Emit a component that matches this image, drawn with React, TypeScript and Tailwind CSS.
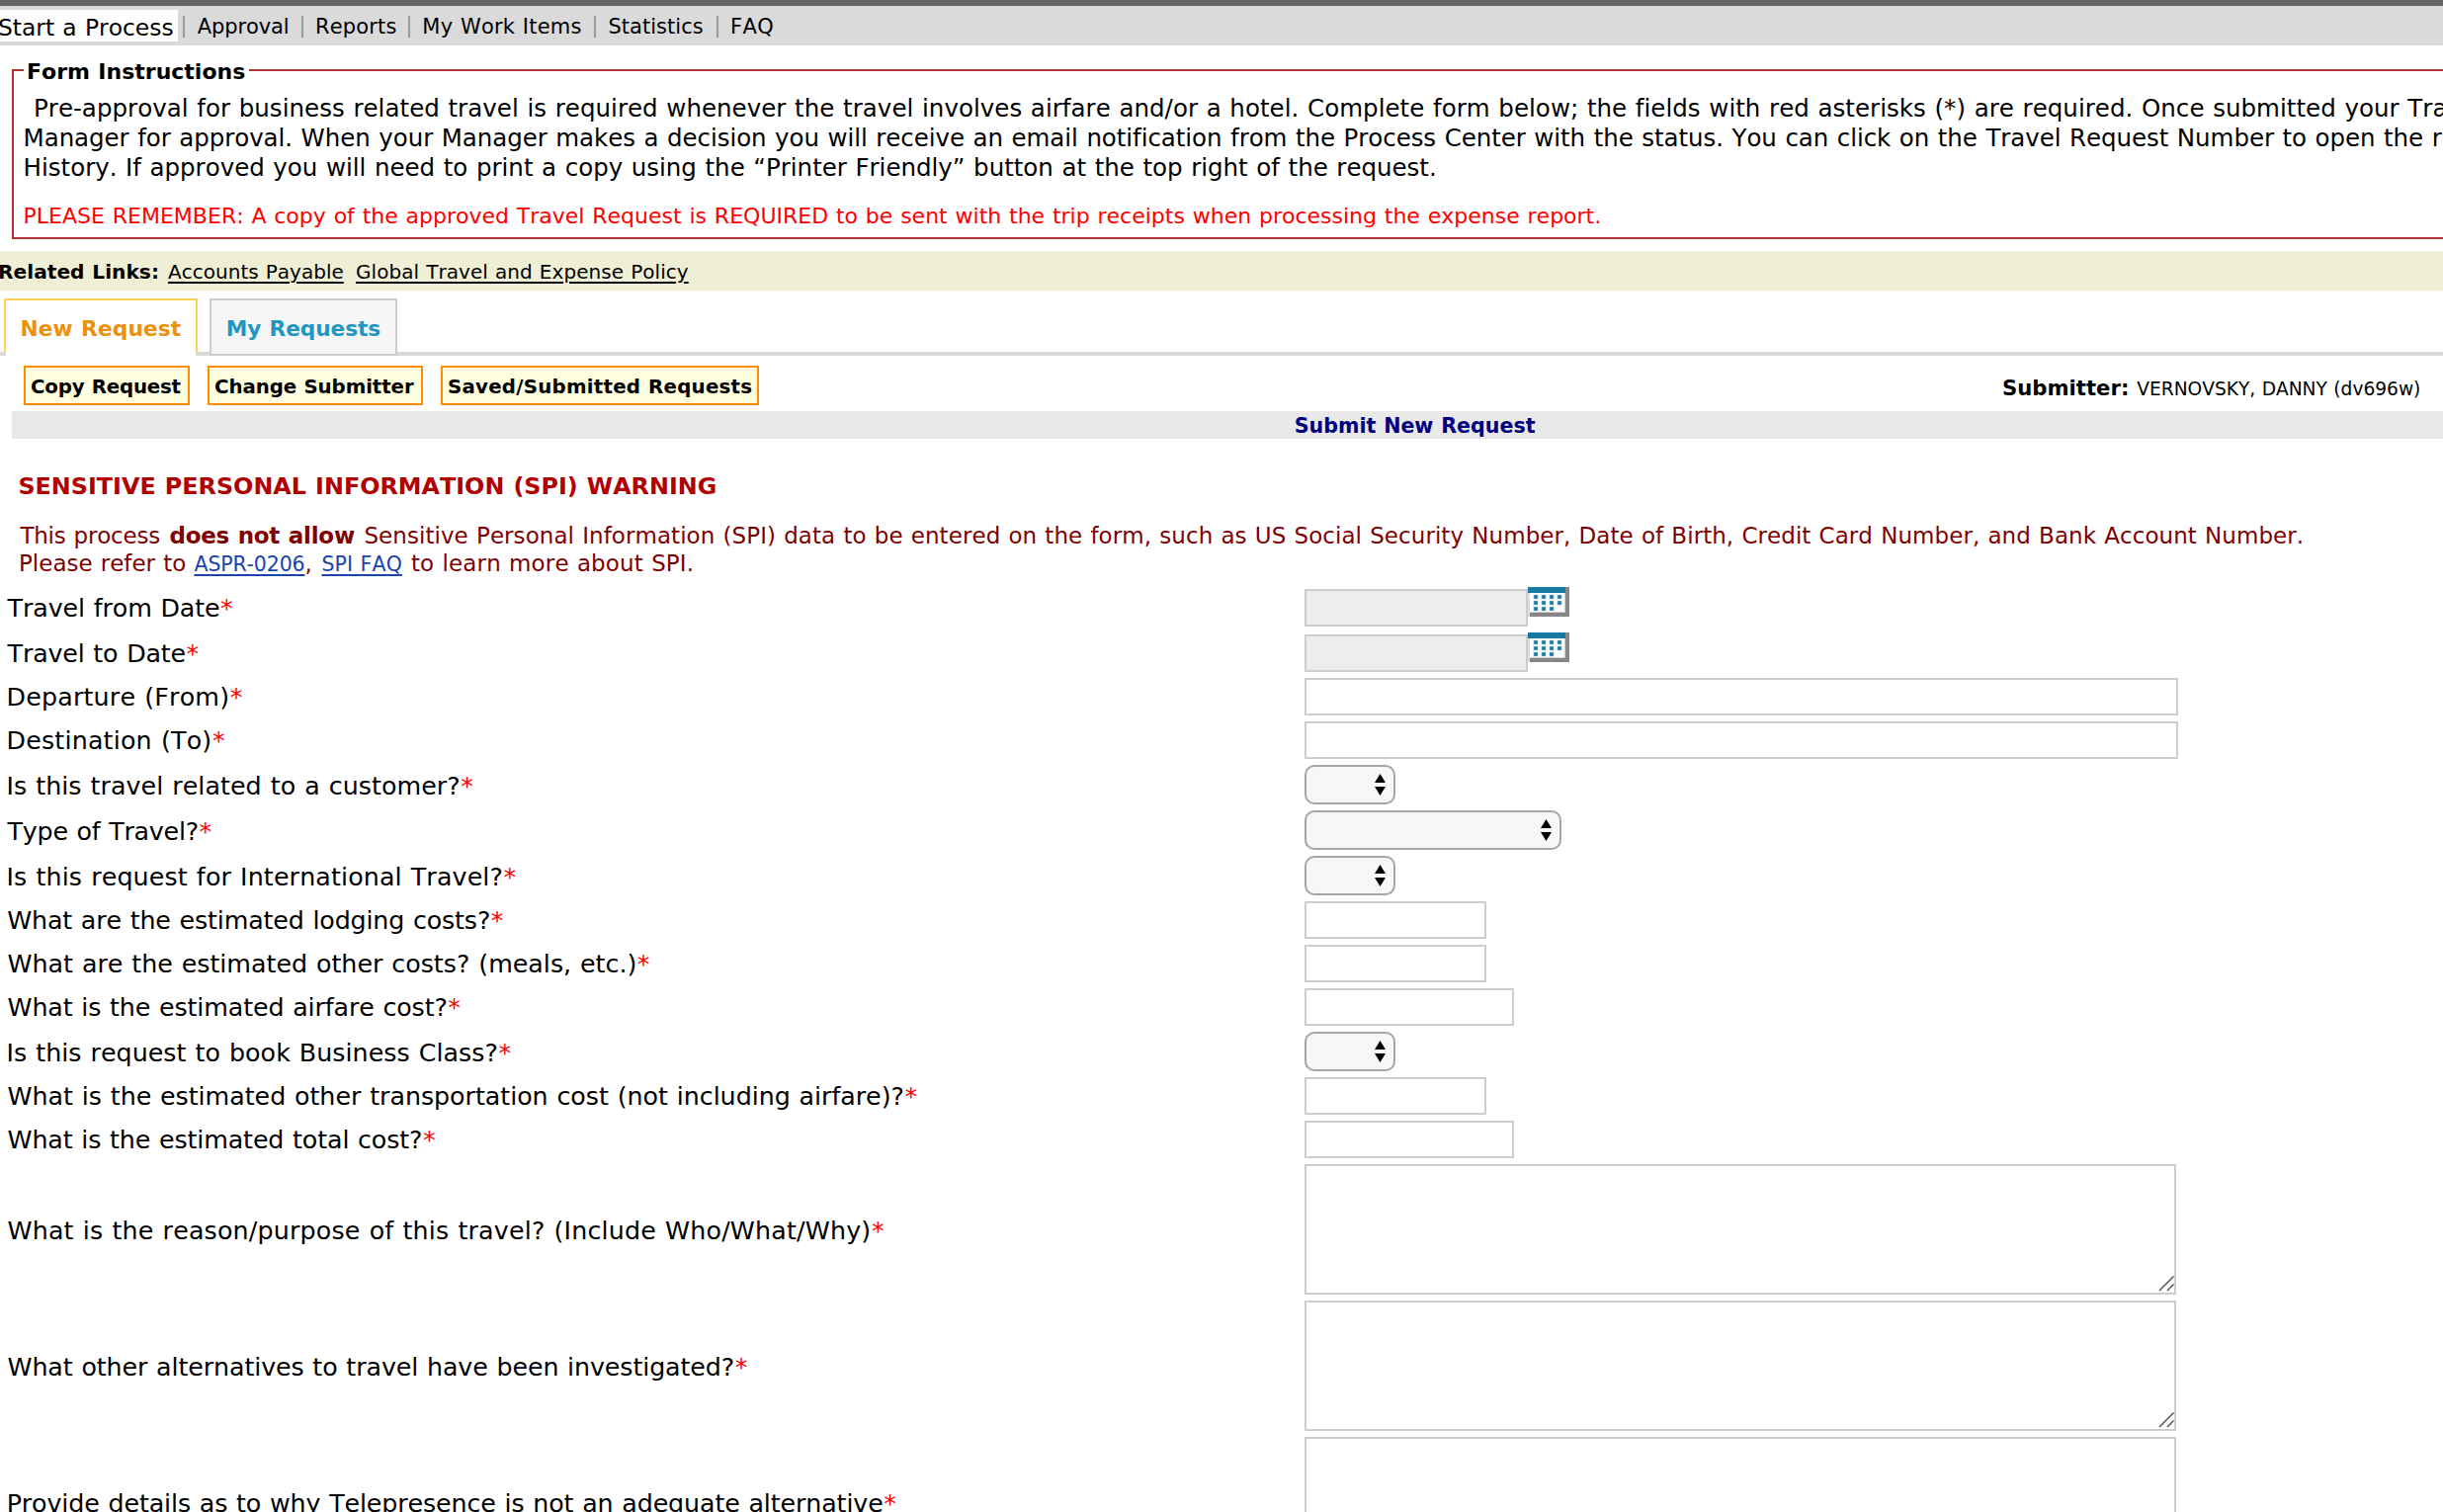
import type { ReactNode } from 'react';

const TEXT = 'whitespace-nowrap [font-kerning:none] [word-spacing:0.034em]';

const navItems = [
  { label: 'Approval', cls: 'w-[120px] tracking-[-0.12px] pl-[12.8px]' },
  { label: 'Reports', cls: 'w-[108px] tracking-[0.14px] pl-[12px]' },
  { label: 'My Work Items', cls: 'w-[188px] tracking-[0.22px] pl-[12.3px]' },
  { label: 'Statistics', cls: 'w-[124px] tracking-[0.02px] pl-[12.5px]' },
  { label: 'FAQ', cls: 'tracking-[0.46px] pl-[12px]' },
];

function NavBar() {
  return (
    <nav className="h-[46px] border-t-[6px] border-[#656565] bg-[#dadada] flex text-[21px] leading-[26px]">
      <div className={`mt-1 h-8 w-[180px] mr-[5px] bg-white text-[23.4px] leading-8 ${TEXT}`}>
        <div className="-ml-[2px] pt-[2px]">Start a Process</div>
      </div>
      {navItems.map((n) => (
        <div key={n.label} className={`mt-[10px] h-[22px] border-l-2 border-[#9a9a9a] ${TEXT} ${n.cls}`}>
          <div className="-mt-[2px]">{n.label}</div>
        </div>
      ))}
    </nav>
  );
}

function Instructions() {
  return (
    <fieldset className="mt-[13px] ml-3 h-[183px] w-[2600px] border-2 border-[#b03434]">
      <legend className={`ml-[10px] h-6 w-[228px] pt-[3px] pl-[3px] text-[22px] leading-[22px] font-bold ${TEXT}`}>
        Form Instructions
      </legend>
      <div className={`ml-[9.6px] mt-[12px] text-[24.5px] leading-[30px] ${TEXT}`}>
        <div className="pl-[10.4px] tracking-[0.032px]">
          Pre-approval for business related travel is required whenever the travel involves airfare and/or a hotel. Complete form below; the fields with red asterisks (*) are required. Once submitted your Travel
        </div>
        <div className="tracking-[-0.056px]">
          Manager for approval. When your Manager makes a decision you will receive an email notification from the Process Center with the status. You can click on the Travel Request Number to open the request
        </div>
        <div className="tracking-[-0.01px]">
          History. If approved you will need to print a copy using the “Printer Friendly” button at the top right of the request.
        </div>
        <div className="mt-[19px] text-[22.05px] tracking-[-0.025px] text-[#ff0000]">
          PLEASE REMEMBER: A copy of the approved Travel Request is REQUIRED to be sent with the trip receipts when processing the expense report.
        </div>
      </div>
    </fieldset>
  );
}

function RelatedLinks() {
  return (
    <div className={`mt-3 h-10 bg-[#efefd6] flex text-[20px] leading-[42px] ${TEXT}`}>
      <div className="-ml-[2px] w-[172px] text-[20.2px] font-bold">Related Links:</div>
      <a className="w-[190px] tracking-[0.02px] underline decoration-2 underline-offset-[3px] [text-decoration-skip-ink:auto]">Accounts Payable</a>
      <a className="tracking-[0.05px] underline decoration-2 underline-offset-[3px] [text-decoration-skip-ink:auto]">Global Travel and Expense Policy</a>
    </div>
  );
}

function Tabs() {
  return (
    <div className="mt-2">
      <div className={`relative z-10 -mb-1 flex h-[58px] items-start pl-1 text-[21.7px] leading-[30px] font-bold ${TEXT}`}>
        <div className="h-[54px] w-[196px] border-2 border-b-0 border-[#ffd24f] pt-[14px] pl-[14.5px] tracking-[0.11px] text-[#ec9108]">
          New Request
        </div>
        <div className="ml-3 h-[58px] w-[190px] border-2 border-[#cccccc] bg-[#f6f6f6] pt-[14px] pl-[14.8px] tracking-[-0.09px] text-[#2196c3]">
          My Requests
        </div>
      </div>
      <div className="flex h-1">
        <div className="w-[6px] bg-[#dadada]" />
        <div className="w-[192px]" />
        <div className="flex-1 bg-[#dadada]" />
      </div>
    </div>
  );
}

const buttons = [
  { label: 'Copy Request', cls: 'w-[168px] tracking-[-0.2px]' },
  { label: 'Change Submitter', cls: 'w-[218px] tracking-[-0.1px]' },
  { label: 'Saved/Submitted Requests', cls: 'w-[322px] tracking-[0.24px]' },
];

function Toolbar() {
  return (
    <div className={`mt-[10px] flex h-10 pl-6 ${TEXT}`}>
      <div className="flex w-[2002px] gap-[18px]">
        {buttons.map((b) => (
          <button
            key={b.label}
            className={`h-10 shrink-0 border-2 border-[#ff8c00] bg-[#ffffe0] pt-[3px] pl-[5px] text-left text-[19.8px] leading-[33px] font-bold ${TEXT} ${b.cls}`}
          >
            {b.label}
          </button>
        ))}
      </div>
      <div className="w-[136.3px] pt-2 text-[21.2px] leading-[30px] font-bold">Submitter:</div>
      <div className="pt-[9px] text-[18.6px] leading-[30px]">VERNOVSKY, DANNY (dv696w)</div>
    </div>
  );
}

function SpiWarning() {
  return (
    <div className={`mt-[34px] text-[23px] leading-7 text-[#800000] ${TEXT}`}>
      <div className="pl-[18.4px] text-[23.85px] font-bold text-[#b00000]">SENSITIVE PERSONAL INFORMATION (SPI) WARNING</div>
      <div className="mt-[22px] flex h-7 pl-[20.4px]">
        <div className="w-[151px] tracking-[-0.2px]">This process</div>
        <div className="w-[197px] font-bold tracking-[-0.22px]">does not allow</div>
        <div className="tracking-[0.06px]">
          Sensitive Personal Information (SPI) data to be entered on the form, such as US Social Security Number, Date of Birth, Credit Card Number, and Bank Account Number.
        </div>
      </div>
      <div className="flex h-7 pl-[19px]">
        <div className="w-[177.5px]">Please refer to</div>
        <a className="pt-px text-[20.5px] tracking-[-0.14px] text-[#1a44ad] underline decoration-2 underline-offset-[3px]">ASPR-0206</a>
        <div className="w-[17px]">,</div>
        <a className="w-[90.5px] pt-px text-[20.5px] tracking-[0.11px] text-[#1a44ad] underline decoration-2 underline-offset-[3px]">SPI FAQ</a>
        <div className="tracking-[0.13px]">to learn more about SPI.</div>
      </div>
    </div>
  );
}

function CalendarIcon() {
  const dots = [0, 1, 2].flatMap((r) => [0, 1, 2, 3].filter((c) => r < 2 || c < 3).map((c) => [c, r]));
  return (
    <svg width="42" height="30" viewBox="0 0 42 30" className="block self-start">
      <rect width="38" height="30" fill="#fff" />
      <rect x="38" width="4" height="30" fill="#868686" />
      <rect x="2" y="26" width="40" height="4" fill="#868686" />
      <rect y="6" width="2" height="24" fill="#dcdcdc" />
      <rect x="2" y="25" width="36" height="1" fill="#cfcfcf" />
      <rect x="37" y="6" width="1" height="20" fill="#cfcfcf" />
      <rect width="38" height="6" fill="#1878a5" />
      {dots.map(([c, r]) => (
        <g key={`${c}-${r}`}>
          <rect x={5.4 + c * 8} y={7.6 + r * 6} width="5.2" height="4.8" fill="#1878a5" opacity="0.25" />
          <rect x={6.2 + c * 8} y={8.2 + r * 6} width="3.6" height="3.6" fill="#1878a5" />
        </g>
      ))}
    </svg>
  );
}

function DateField() {
  return (
    <div className="flex h-10 items-end">
      <div className="h-[38px] w-[226px] border-2 border-[#cdcdcd] bg-[#ededed]" />
      <CalendarIcon />
    </div>
  );
}

function SelectBox({ width }: { width: string }) {
  return (
    <div className={`flex h-10 items-center justify-end rounded-[10px] border-2 border-[#a5a5a5] bg-[#f7f7f7] pr-2 ${width}`}>
      <svg width="11" height="22" viewBox="0 0 11 22">
        <path d="M5.5 0 L11 9 H0 Z M0 13 H11 L5.5 22 Z" fill="#000" />
      </svg>
    </div>
  );
}

function TextBox({ width }: { width: string }) {
  return <div className={`h-[38px] border-2 border-[#cdcdcd] bg-white ${width}`} />;
}

function TextAreaBox() {
  return (
    <div className="flex h-[132px] w-[882px] items-end justify-end border-2 border-[#cdcdcd] bg-white">
      <svg width="16" height="17" viewBox="0 0 16 17">
        <path d="M1 15 L15.5 0.5 M9 15 L15.5 8.5" stroke="#555" strokeWidth="1.5" fill="none" />
      </svg>
    </div>
  );
}

type Row = { label: string; ls: string; h: string; field: ReactNode };

const SHORT = 'h-[44px]';
const MID = 'h-[46px] [&>label]:pt-[2px]';
const TALL = 'h-[138px] [&>label]:pt-[2px]';

const rows: Row[] = [
  { label: 'Travel from Date', ls: 'pl-[7.6px] tracking-[-0.12px]', h: MID, field: <DateField /> },
  { label: 'Travel to Date', ls: 'pl-[7.6px] tracking-[-0.171px]', h: MID, field: <DateField /> },
  { label: 'Departure (From)', ls: 'pl-[6.5px] tracking-[0.179px]', h: SHORT, field: <TextBox width="w-[884px]" /> },
  { label: 'Destination (To)', ls: 'pl-[6.5px] tracking-[0.18px]', h: SHORT, field: <TextBox width="w-[884px]" /> },
  { label: 'Is this travel related to a customer?', ls: 'pl-[6.5px] tracking-[0.045px]', h: MID, field: <SelectBox width="w-[92px]" /> },
  { label: 'Type of Travel?', ls: 'pl-[7.6px] tracking-[-0.227px]', h: MID, field: <SelectBox width="w-[260px]" /> },
  { label: 'Is this request for International Travel?', ls: 'pl-[6.5px] tracking-[0.12px]', h: MID, field: <SelectBox width="w-[92px]" /> },
  { label: 'What are the estimated lodging costs?', ls: 'pl-[7.2px] tracking-[-0.156px]', h: SHORT, field: <TextBox width="w-[184px]" /> },
  { label: 'What are the estimated other costs? (meals, etc.)', ls: 'pl-[7.5px] tracking-[-0.015px]', h: SHORT, field: <TextBox width="w-[184px]" /> },
  { label: 'What is the estimated airfare cost?', ls: 'pl-[7.5px] tracking-[-0.13px]', h: SHORT, field: <TextBox width="w-[212px]" /> },
  { label: 'Is this request to book Business Class?', ls: 'pl-[6.5px] tracking-[0.035px]', h: MID, field: <SelectBox width="w-[92px]" /> },
  { label: 'What is the estimated other transportation cost (not including airfare)?', ls: 'pl-[7.5px] tracking-[-0.045px]', h: SHORT, field: <TextBox width="w-[184px]" /> },
  { label: 'What is the estimated total cost?', ls: 'pl-[7.5px] tracking-[-0.135px]', h: SHORT, field: <TextBox width="w-[212px]" /> },
  { label: 'What is the reason/purpose of this travel? (Include Who/What/Why)', ls: 'pl-[7.5px] tracking-[0.165px]', h: TALL, field: <TextAreaBox /> },
  { label: 'What other alternatives to travel have been investigated?', ls: 'pl-[7.5px] tracking-[-0.112px]', h: TALL, field: <TextAreaBox /> },
  { label: 'Provide details as to why Telepresence is not an adequate alternative', ls: 'pl-[6.7px] tracking-[-0.125px]', h: TALL, field: <TextAreaBox /> },
];

export default function App() {
  return (
    <div className="h-[1530px] w-[2472px] overflow-hidden bg-white text-black [font-family:'DejaVu_Sans',sans-serif]">
      <NavBar />
      <Instructions />
      <RelatedLinks />
      <Tabs />
      <Toolbar />
      <div className={`mt-[6px] ml-3 h-7 bg-[#e9e9e9] pl-[1297.7px] text-[20.6px] leading-[30px] font-bold text-[#000080] ${TEXT}`}>
        Submit New Request
      </div>
      <SpiWarning />
      <div className="mt-[7px]">
        {rows.map((r) => (
          <div key={r.label} className={`flex items-center ${r.h}`}>
            <label className={`w-[1320px] text-[25.33px] leading-[30px] ${TEXT} ${r.ls}`}>
              {r.label}
              <span className="ml-[0.5px] text-[#ff0000]">*</span>
            </label>
            {r.field}
          </div>
        ))}
      </div>
    </div>
  );
}
